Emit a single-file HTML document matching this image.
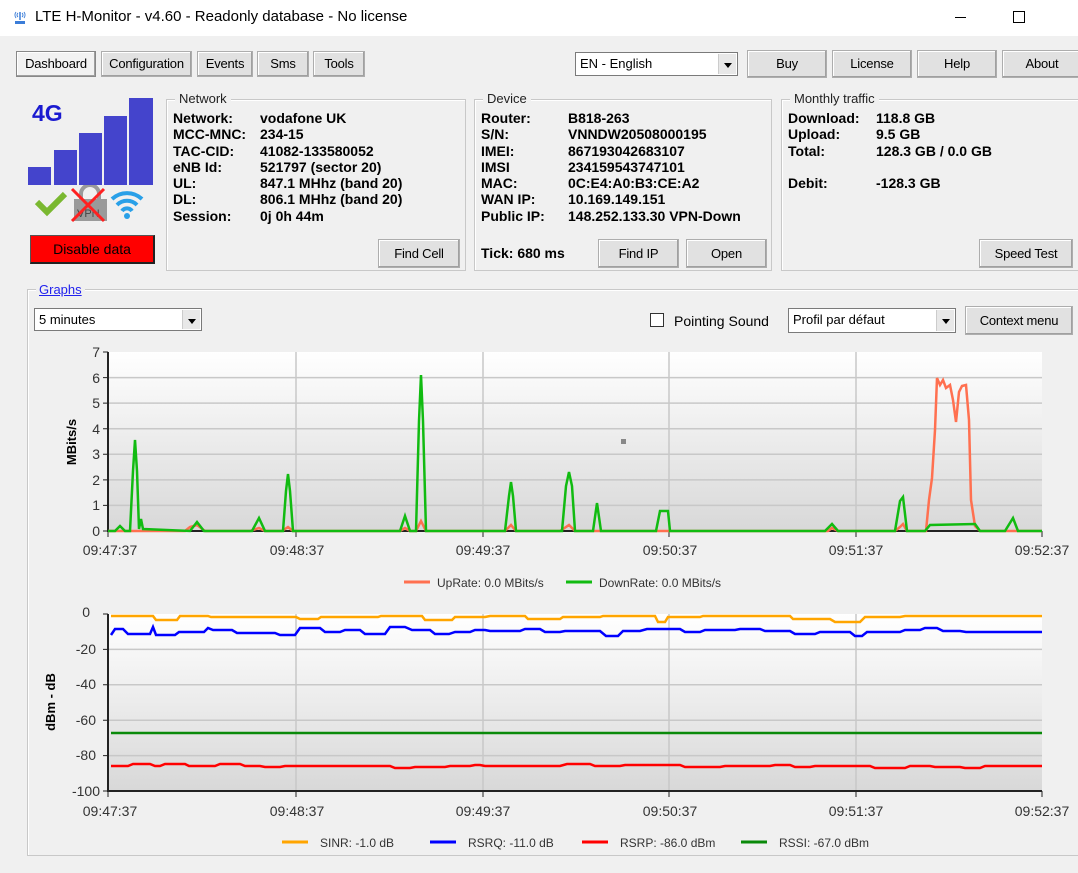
<!DOCTYPE html>
<html><head><meta charset="utf-8"><style>
*{margin:0;padding:0;box-sizing:border-box}
body{width:1078px;height:873px;background:#f0f0f0;font-family:"Liberation Sans",sans-serif;font-size:14px;color:#000;position:relative;overflow:hidden}
.a{position:absolute}
.btn{position:absolute;background:#e1e1e1;border:1px solid #adadad;box-shadow:inset -1px -1px 0 #a0a0a0,inset 1px 1px 0 #fff;text-align:center;font-size:13px;line-height:24px;letter-spacing:-0.2px}
.grp{position:absolute;border:1px solid #c8c8c8;box-shadow:inset 1px 1px 0 #fff}
.grp .t{position:absolute;top:-9px;left:8px;background:#f0f0f0;padding:0 4px;font-size:13px;line-height:16px;color:#222}
.b{font-weight:bold;font-size:14px;line-height:16.3px}
.dd{position:absolute;background:#fff;border:1px solid #7a7a7a;font-size:13px;line-height:22px;padding-left:4px}
.dd .ar{position:absolute;right:1px;top:1px;bottom:1px;width:18px;background:#e8e8e8;border-left:1px solid #ccc}
.dd .ar:after{content:"";position:absolute;left:5px;top:9px;border:4px solid transparent;border-top:5px solid #000}
</style></head><body>
<div class="a" style="left:0;top:0;width:1078px;height:36px;background:#fff"></div>
<svg class="a" style="left:12px;top:9px" width="16" height="16"><path d="M3 12h10v3H3z" fill="#3b7dd8"/><path d="M8 3v8" stroke="#3b7dd8" stroke-width="1.5"/><path d="M4 3a5 5 0 0 0 0 6M12 3a5 5 0 0 1 0 6M6 4a2.5 2.5 0 0 0 0 4M10 4a2.5 2.5 0 0 1 0 4" stroke="#3b7dd8" fill="none"/></svg>
<div class="a" style="left:35px;top:8px;font-size:15px">LTE H-Monitor - v4.60 - Readonly database - No license</div>
<div class="a" style="left:955px;top:17px;width:11px;height:1px;background:#000"></div>
<div class="a" style="left:1013px;top:11px;width:12px;height:12px;border:1px solid #000"></div>

<div class="btn" style="left:16px;top:51px;width:80px;height:26px;background:#f2f2f2;border-color:#888">Dashboard</div>
<div class="btn" style="left:101px;top:51px;width:91px;height:26px">Configuration</div>
<div class="btn" style="left:197px;top:51px;width:56px;height:26px">Events</div>
<div class="btn" style="left:257px;top:51px;width:52px;height:26px">Sms</div>
<div class="btn" style="left:313px;top:51px;width:52px;height:26px">Tools</div>

<div class="dd" style="left:575px;top:52px;width:163px;height:24px">EN - English<div class="ar"></div></div>
<div class="btn" style="left:747px;top:50px;width:80px;height:28px;line-height:26px">Buy</div>
<div class="btn" style="left:832px;top:50px;width:80px;height:28px;line-height:26px">License</div>
<div class="btn" style="left:917px;top:50px;width:80px;height:28px;line-height:26px">Help</div>
<div class="btn" style="left:1002px;top:50px;width:80px;height:28px;line-height:26px">About</div>

<div class="a" style="left:32px;top:100px;font:bold 23px 'Liberation Sans',sans-serif;color:#1a1ad0">4G</div>
<div class="a" style="left:28px;top:167px;width:23px;height:18px;background:#4444cc"></div>
<div class="a" style="left:54px;top:150px;width:23px;height:35px;background:#4444cc"></div>
<div class="a" style="left:79px;top:133px;width:23px;height:52px;background:#4444cc"></div>
<div class="a" style="left:104px;top:116px;width:23px;height:69px;background:#4444cc"></div>
<div class="a" style="left:129px;top:98px;width:24px;height:87px;background:#4444cc"></div>
<svg class="a" style="left:34px;top:185px" width="120" height="40">
<path d="M3 17l10 10 18-18" stroke="#7ab830" stroke-width="6" fill="none"/>
<rect x="40" y="14" width="33" height="22" fill="#9a9a9a"/><path d="M47 14v-5a9 9 0 0 1 18 0v5" stroke="#9a9a9a" stroke-width="4" fill="none"/>
<text x="43" y="32" font-size="11" font-family="Liberation Sans" fill="#444">VPN</text>
<path d="M38 4l32 32M70 4L38 36" stroke="#ff2020" stroke-width="3"/>
<path d="M78 14a22 22 0 0 1 30 0M83 20a14 14 0 0 1 20 0M88 26a6 6 0 0 1 10 0" stroke="#29a0e8" stroke-width="4" fill="none"/><circle cx="93" cy="31" r="3" fill="#29a0e8"/>
</svg>
<div class="a" style="left:30px;top:235px;width:125px;height:29px;background:#ff0000;border:1px solid #555;border-right:2px solid #222;border-bottom:2px solid #222;font-size:14px;text-align:center;line-height:26px">Disable data</div>

<div class="grp" style="left:166px;top:99px;width:300px;height:172px"><span class="t">Network</span></div>
<div class="a b" style="left:173px;top:110px">Network:<br>MCC-MNC:<br>TAC-CID:<br>eNB Id:<br>UL:<br>DL:<br>Session:</div>
<div class="a b" style="left:260px;top:110px">vodafone UK<br>234-15<br>41082-133580052<br>521797 (sector 20)<br>847.1 MHhz (band 20)<br>806.1 MHhz (band 20)<br>0j 0h 44m</div>
<div class="btn" style="left:378px;top:239px;width:82px;height:29px;line-height:27px">Find Cell</div>

<div class="grp" style="left:474px;top:99px;width:298px;height:172px"><span class="t">Device</span></div>
<div class="a b" style="left:481px;top:110px">Router:<br>S/N:<br>IMEI:<br>IMSI<br>MAC:<br>WAN IP:<br>Public IP:</div>
<div class="a b" style="left:568px;top:110px">B818-263<br>VNNDW20508000195<br>867193042683107<br>234159543747101<br>0C:E4:A0:B3:CE:A2<br>10.169.149.151<br>148.252.133.30 VPN-Down</div>
<div class="a b" style="left:481px;top:245px">Tick: 680 ms</div>
<div class="btn" style="left:598px;top:239px;width:81px;height:29px;line-height:27px">Find IP</div>
<div class="btn" style="left:686px;top:239px;width:81px;height:29px;line-height:27px">Open</div>

<div class="grp" style="left:781px;top:99px;width:300px;height:172px"><span class="t">Monthly traffic</span></div>
<div class="a b" style="left:788px;top:110px">Download:<br>Upload:<br>Total:<br><br>Debit:</div>
<div class="a b" style="left:876px;top:110px">118.8 GB<br>9.5 GB<br>128.3 GB / 0.0 GB<br><br>-128.3 GB</div>
<div class="btn" style="left:979px;top:239px;width:94px;height:29px;line-height:27px">Speed Test</div>

<div class="grp" style="left:27px;top:289px;width:1060px;height:567px"></div>
<div class="a" style="left:36px;top:282px;background:#f0f0f0;padding:0 3px;font-size:13px;color:#2222ee;text-decoration:underline">Graphs</div>
<div class="dd" style="left:34px;top:308px;width:168px;height:23px;line-height:21px">5 minutes<div class="ar"></div></div>
<div class="a" style="left:650px;top:313px;width:14px;height:14px;background:#fff;border:1px solid #333"></div>
<div class="a" style="left:674px;top:313px;font-size:14px">Pointing Sound</div>
<div class="dd" style="left:788px;top:308px;width:168px;height:25px">Profil par défaut<div class="ar"></div></div>
<div class="btn" style="left:965px;top:306px;width:108px;height:29px;line-height:27px">Context menu</div>

<svg class="a" style="left:0;top:340px" width="1078" height="520" font-family="Liberation Sans" font-size="14">
<defs><linearGradient id="g" x1="0" y1="0" x2="0" y2="1"><stop offset="0" stop-color="#fff"/><stop offset="1" stop-color="#d8d8d8"/></linearGradient></defs>
<g>
<rect x="108" y="12" width="934" height="179" fill="url(#g)"/>
<g stroke="#c8c8c8" stroke-width="1.5"><path d="M108 37.6H1042M108 63.1H1042M108 88.7H1042M108 114.3H1042M108 139.9H1042M108 165.4H1042M296 12V191M483 12V191M669 12V191M856 12V191"/></g>
<path d="M108 12V191H1042" stroke="#222" stroke-width="2" fill="none"/>
<g stroke="#222"><path d="M103 12h5M103 37.6h5M103 63.1h5M103 88.7h5M103 114.3h5M103 139.9h5M103 165.4h5M103 191h5M108 191v6M296 191v6M483 191v6M669 191v6M856 191v6M1042 191v6"/></g>
<g text-anchor="end" fill="#333"><text x="100" y="17">7</text><text x="100" y="43">6</text><text x="100" y="68">5</text><text x="100" y="94">4</text><text x="100" y="119">3</text><text x="100" y="145">2</text><text x="100" y="170">1</text><text x="100" y="196">0</text></g>
<g text-anchor="middle" fill="#333"><text x="110" y="215">09:47:37</text><text x="297" y="215">09:48:37</text><text x="483" y="215">09:49:37</text><text x="670" y="215">09:50:37</text><text x="856" y="215">09:51:37</text><text x="1042" y="215">09:52:37</text></g>
<text transform="translate(76,102) rotate(-90)" text-anchor="middle" font-weight="bold" font-size="13">MBits/s</text>
<rect x="621" y="99" width="5" height="5" fill="#888"/>
<path d="M108 191L185 191L190 187L197 185L205 191L250 191L259 188L265 191L282 191L288 187L293 191L400 191L405 188L410 191L416 191L421 181L426 191L505 191L511 185L516 191L560 191L569 185L575 191L828 191L832 188L838 191L895 191L900 187L903 184L907 191L926 191L929 160L932 138L935 90L937 38L940 45L943 40L946 48L950 45L953 60L956 82L959 52L962 46L966 45L969 80L971 160L975 186L980 191L1042 191" stroke="#ff7050" stroke-width="2.5" fill="none"/>
<path d="M108 191L115 191L120 186L125 191L130 191L133 131L135 100L137 131L139 189L141 179L143 189L190 191L197 182L204 191L252 191L259 178L265 191L283 191L286 151L288 134L290 151L293 191L400 191L405 176L410 191L416 191L419 81L421 35L423 81L426 191L505 191L509 156L511 142L513 156L516 191L562 191L566 146L569 132L572 146L575 191L593 191L597 163L601 191L656 191L660 171L668 171L670 191L825 191L832 184L838 191L895 191L900 161L903 157L907 191L925 191L930 185L975 184L980 191L1005 191L1013 178L1018 191L1042 191" stroke="#11bb11" stroke-width="2.5" fill="none"/>
<path d="M404 242h26" stroke="#ff7050" stroke-width="3"/><text x="437" y="247" font-size="12" fill="#333">UpRate: 0.0 MBits/s</text>
<path d="M566 242h26" stroke="#11bb11" stroke-width="3"/><text x="599" y="247" font-size="12" fill="#333">DownRate: 0.0 MBits/s</text>
</g>
<g>
<rect x="108" y="274" width="934" height="177" fill="url(#g)"/>
<g stroke="#c8c8c8" stroke-width="1.5"><path d="M108 309.4H1042M108 344.8H1042M108 380.2H1042M108 415.6H1042M296 274V451M483 274V451M669 274V451M856 274V451"/></g>
<path d="M108 274V451H1042" stroke="#222" stroke-width="2" fill="none"/>
<g stroke="#222"><path d="M103 274h5M103 309.4h5M103 344.8h5M103 380.2h5M103 415.6h5M103 451h5M108 451v6M296 451v6M483 451v6M669 451v6M856 451v6M1042 451v6"/></g>
<g text-anchor="end" fill="#333"><text x="90" y="277">0</text><text x="96" y="314">-20</text><text x="96" y="349">-40</text><text x="96" y="385">-60</text><text x="96" y="420">-80</text><text x="100" y="456">-100</text></g>
<g text-anchor="middle" fill="#333"><text x="110" y="476">09:47:37</text><text x="297" y="476">09:48:37</text><text x="483" y="476">09:49:37</text><text x="670" y="476">09:50:37</text><text x="856" y="476">09:51:37</text><text x="1042" y="476">09:52:37</text></g>
<text transform="translate(55,362) rotate(-90)" text-anchor="middle" font-weight="bold" font-size="13">dBm - dB</text>
<path d="M111 276H153L156 280H177L180 276H208L211 277H296L300 279H318L321 277H378L381 276H422L425 280H452L455 277H485L490 276H525L528 279H560L563 277H600L603 276H655L658 282H665L668 277H700L703 276H790L793 279H830L835 282H860L865 277H900L905 276H1042" stroke="#ffa500" stroke-width="2.5" fill="none"/>
<path d="M111 295L115 289H123L128 294H150L153 287L156 295H175L179 292H204L208 288L213 290H232L237 293H275L280 295H295L300 288H320L325 292H340L345 290H360L365 294H385L390 287H405L412 290H430L435 294H445L449 294L455 292H470L475 290H485L490 291H520L525 289H540L545 292H560L565 291H600L606 296H618L623 291H640L647 289H680L685 292H700L705 290H735L740 289H760L765 291H790L795 294H815L820 292H850L855 296H862L867 292H900L905 290H920L925 288H937L943 291H960L966 292H1042" stroke="#0000ff" stroke-width="2.5" fill="none"/>
<path d="M111 393H1042" stroke="#0a8a0a" stroke-width="2.5"/>
<path d="M111 426H128L133 424H150L155 426H160L165 424H185L189 426H215L220 424H240L245 426H260L265 427H280L285 426H390L395 428H410L415 427H445L450 426H470L475 425H480L485 426H560L567 424H590L595 426H620L625 425H680L685 427H720L725 426H770L775 425H790L795 427H810L815 426H870L875 428H905L910 426H930L935 427H960L965 428H980L985 426H1042" stroke="#ff0000" stroke-width="2.5" fill="none"/>
<path d="M282 502h26" stroke="#ffa500" stroke-width="3"/><text x="320" y="507" font-size="12" fill="#333">SINR: -1.0 dB</text>
<path d="M430 502h26" stroke="#0000ff" stroke-width="3"/><text x="468" y="507" font-size="12" fill="#333">RSRQ: -11.0 dB</text>
<path d="M582 502h26" stroke="#ff0000" stroke-width="3"/><text x="620" y="507" font-size="12" fill="#333">RSRP: -86.0 dBm</text>
<path d="M741 502h26" stroke="#0a8a0a" stroke-width="3"/><text x="779" y="507" font-size="12" fill="#333">RSSI: -67.0 dBm</text>
</g>
</svg>
</body></html>
